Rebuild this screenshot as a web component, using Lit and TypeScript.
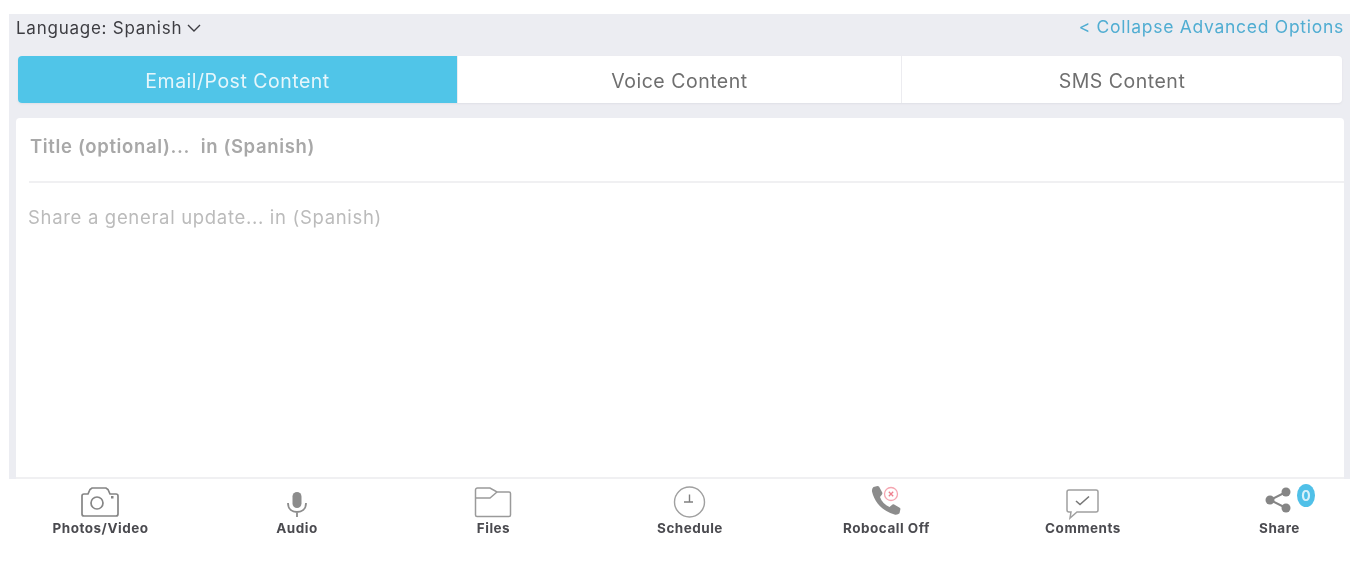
import { LitElement, html, css, svg } from 'lit';
import { customElement } from 'lit/decorators.js';

const icons = {
  camera: svg`<svg width="38" height="32" viewBox="0 0 38 32" fill="none" stroke="#858585" stroke-width="1.700">
    <path d="M3 9h4l2-4.500 2-1.500h14l2 1.500 2 4.500h6a2 2 0 0 1 2 2v18a2 2 0 0 1-2 2H3a2 2 0 0 1-2-2V11a2 2 0 0 1 2-2z"/>
    <circle cx="16" cy="18" r="6"/><rect x="30" y="11" width="2.500" height="2.500" fill="#858585" stroke="none"/></svg>`,
  mic: svg`<svg width="38" height="32" viewBox="0 0 38 32" fill="none" stroke="#8c8c8c" stroke-width="1.800">
    <rect x="14.500" y="7" width="9" height="16" rx="4.500" fill="#8c8c8c" stroke="none"/>
    <path d="M10 18c0 6 4 9 9 9s9-3 9-9M19 27v5"/></svg>`,
  folder: svg`<svg width="38" height="32" viewBox="0 0 38 32" fill="none" stroke="#9a9a9a" stroke-width="1.500">
    <path d="M1.500 5a2 2 0 0 1 2-2H16l7 4h12a1.500 1.500 0 0 1 1.500 1.500V30a1.500 1.500 0 0 1-1.500 1.500H3A1.500 1.500 0 0 1 1.500 30z"/>
    <path d="M1.500 13H16l7-6"/></svg>`,
  clock: svg`<svg width="38" height="32" viewBox="0 0 38 32" fill="none" stroke="#a0a0a0" stroke-width="1.400">
    <circle cx="18.500" cy="17" r="15"/><path d="M18.500 9.500V17M13 17h9" stroke="#808080"/></svg>`,
  phone: svg`<svg width="38" height="32" viewBox="0 0 38 32" fill="none">
    <path d="M6.500 2l4-1 1.500 .5 3.500 6.500-.5 1.500-2 2.500c1.500 4.500 5 8 9.500 10l3-2.500 1.200-.3 6 3.500 .8 1-1 4.500c-1 1.200-3 1.800-5 1.300C15.500 26 7.500 17.500 5 6.500 4.800 4.500 5.500 3 6.500 2z" fill="#8c8c8c"/>
    <circle cx="24" cy="9" r="6.500" fill="#ffffff" stroke="#f5a5b0" stroke-width="1.300"/>
    <path d="M21.800 6.800l4.400 4.400M26.200 6.800l-4.400 4.400" stroke="#ee7f8d" stroke-width="1.300"/></svg>`,
  comment: svg`<svg width="38" height="32" viewBox="0 0 38 32" fill="none" stroke="#a0a0a0" stroke-width="1.500">
    <path d="M5 5h27a2 2 0 0 1 2 2v18a2 2 0 0 1-2 2H13l-7 6 1-6H5a2 2 0 0 1-2-2V7a2 2 0 0 1 2-2z"/>
    <path d="M12 16l4 3.500 9-8" stroke="#777777" stroke-width="1.600"/></svg>`,
  share: svg`<svg width="38" height="32" viewBox="0 0 38 32" fill="none">
    <path d="M26 7L10 15l16 8" stroke="#858585" stroke-width="2"/>
    <circle cx="26" cy="7" r="4.500" fill="#858585"/><circle cx="10" cy="15" r="4.500" fill="#858585"/><circle cx="26" cy="23" r="4.500" fill="#858585"/></svg>`,
};

const actions = [
  { label: 'Photos/Video', icon: icons.camera },
  { label: 'Audio', icon: icons.mic },
  { label: 'Files', icon: icons.folder },
  { label: 'Schedule', icon: icons.clock },
  { label: 'Robocall Off', icon: icons.phone },
  { label: 'Comments', icon: icons.comment },
  { label: 'Share', icon: icons.share, badge: '0' },
];

@customElement('app-root')
export class AppRoot extends LitElement {
  static styles = css`
    :host {
      display: block;
      height: 562px;
      padding-top: 14px;
      box-sizing: border-box;
      background: #ffffff;
      font-family: 'Inter', 'Open Sans', sans-serif;
      overflow: hidden;
    }
    .panel {
      margin: 0 4px 0 9px;
      height: 465px;
      background: #ecedf2;
      display: flex;
      flex-direction: column;
    }
    .top {
      display: flex;
      justify-content: space-between;
      align-items: center;
      height: 28px;
      padding: 0 6px 0 7px;
      filter: blur(0.5px);
    }
    .language {
      display: flex;
      align-items: center;
      gap: 5px;
      font-size: 17px;
      letter-spacing: 0.750px;
      color: #3d3d42;
    }
    .collapse {
      font-size: 17.500px;
      letter-spacing: 0.720px;
      color: #50add2;
      margin-bottom: 3px;
    }
    .tabs {
      display: grid;
      grid-template-columns: 439px 444px 441px;
      height: 47px;
      margin: 14px 8px 0 9px;
      background: #ffffff;
      border-radius: 4px;
      box-shadow: 0 1px 2px #dfe0e6;
      overflow: hidden;
    }
    .tab {
      display: flex;
      align-items: center;
      justify-content: center;
      padding-top: 3px;
      font-size: 19.500px;
      letter-spacing: 0.500px;
      color: #6f6f6f;
      border-left: 1px solid #ececf0;
    }
    .tab span {
      filter: blur(0.5px);
    }
    .tab.active {
      background: #50c5e8;
      color: #e6f6fb;
      border-left: none;
    }
    .card {
      flex: 1;
      margin: 15px 6px 0 7px;
      background: #ffffff;
      border-radius: 4px 4px 0 0;
      border-bottom: 2px solid #f0f0f2;
      display: flex;
      flex-direction: column;
    }
    .title {
      height: 55px;
      padding: 0 0 8px 1px;
      margin-left: 13px;
      display: flex;
      align-items: center;
      font-size: 18.500px;
      letter-spacing: 0.640px;
      font-weight: 600;
      color: #a8a8a8;
      border-bottom: 2px solid #f0f0f2;
      box-sizing: content-box;
    }
    .title span, .body span {
      filter: blur(0.5px);
    }
    .body {
      padding: 23px 0 0 12px;
      font-size: 18.500px;
      letter-spacing: 0.680px;
      color: #bbbbbb;
    }
    .actions {
      display: flex;
      justify-content: space-between;
      padding: 6px 25px 0 50px;
    }
    .action {
      position: relative;
      width: 100px;
      display: flex;
      flex-direction: column;
      align-items: center;
      filter: blur(0.5px);
    }
    .icon {
      height: 32px;
      display: flex;
      align-items: center;
      justify-content: center;
    }
    .icon svg {
      overflow: visible;
    }
    .label {
      margin-top: 3px;
      padding-left: 1px;
      font-size: 13.500px;
      letter-spacing: 0.500px;
      font-weight: 700;
      color: #4a4a4f;
      white-space: nowrap;
    }
    .badge {
      position: absolute;
      top: -1px;
      left: 68px;
      width: 18px;
      height: 23px;
      border-radius: 50%;
      background: #50c0e8;
      color: #d8f1fa;
      font-size: 14px;
      font-weight: 700;
      display: flex;
      align-items: center;
      justify-content: center;
    }
  `;

  render() {
    return html`
      <div class="panel">
        <div class="top">
          <div class="language">
            Language: Spanish
            <svg width="14" height="9" viewBox="0 0 14 9" fill="none" stroke="#3d3d42" stroke-width="1.400"><path d="M1 1l6 6 6-6"/></svg>
          </div>
          <div class="collapse">&lt; Collapse Advanced Options</div>
        </div>
        <div class="tabs">
          <div class="tab active"><span>Email/Post Content</span></div>
          <div class="tab"><span>Voice Content</span></div>
          <div class="tab"><span>SMS Content</span></div>
        </div>
        <div class="card">
          <div class="title"><span>Title (optional)...&nbsp; in (Spanish)</span></div>
          <div class="body"><span>Share a general update... in (Spanish)</span></div>
        </div>
      </div>
      <div class="actions">
        ${actions.map(
          (a) => html`
            <div class="action">
              <div class="icon">${a.icon}</div>
              <div class="label">${a.label}</div>
              ${a.badge ? html`<div class="badge">${a.badge}</div>` : ''}
            </div>
          `
        )}
      </div>
    `;
  }
}
